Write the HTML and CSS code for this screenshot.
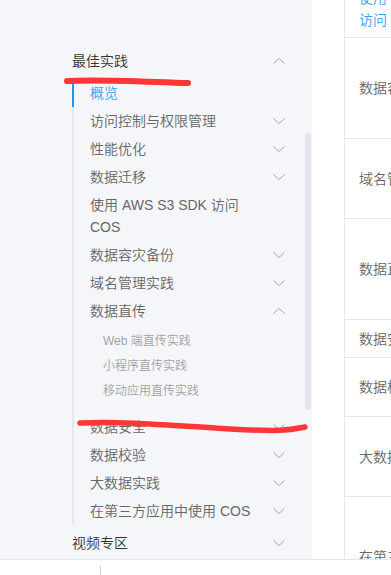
FILE: index.html
```html
<!DOCTYPE html>
<html lang="zh-CN">
<head>
    <meta charset="utf-8" />
    <title>最佳实践</title>
    <link rel="stylesheet" href="styles.css">
</head>
<body>
<div class="page">
    <aside class="sidebar">
        <ul class="menu">
            <li class="menu-item">
                <div class="menu-title">最佳实践<svg class="chev" viewBox="0 0 12 6"><polyline points="0.5,5.5 6,0.5 11.5,5.5"/></svg></div>
                <ul class="sub">
                    <li class="sub-item active"><div class="sub-title">概览</div></li>
                    <li class="sub-item"><div class="sub-title">访问控制与权限管理<svg class="chev" viewBox="0 0 12 6"><polyline points="0.5,0.5 6,5.5 11.5,0.5"/></svg></div></li>
                    <li class="sub-item"><div class="sub-title">性能优化<svg class="chev" viewBox="0 0 12 6"><polyline points="0.5,0.5 6,5.5 11.5,0.5"/></svg></div></li>
                    <li class="sub-item"><div class="sub-title">数据迁移<svg class="chev" viewBox="0 0 12 6"><polyline points="0.5,0.5 6,5.5 11.5,0.5"/></svg></div></li>
                    <li class="sub-item"><div class="sub-title"><span class="wrap">使用 AWS S3 SDK 访问 COS</span></div></li>
                    <li class="sub-item"><div class="sub-title">数据容灾备份<svg class="chev" viewBox="0 0 12 6"><polyline points="0.5,0.5 6,5.5 11.5,0.5"/></svg></div></li>
                    <li class="sub-item"><div class="sub-title">域名管理实践<svg class="chev" viewBox="0 0 12 6"><polyline points="0.5,0.5 6,5.5 11.5,0.5"/></svg></div></li>
                    <li class="sub-item">
                        <div class="sub-title">数据直传<svg class="chev" viewBox="0 0 12 6"><polyline points="0.5,5.5 6,0.5 11.5,5.5"/></svg></div>
                        <ul class="leaf">
                            <li>Web 端直传实践</li>
                            <li>小程序直传实践</li>
                            <li>移动应用直传实践</li>
                        </ul>
                    </li>
                    <li class="sub-item"><div class="sub-title">数据安全<svg class="chev" viewBox="0 0 12 6"><polyline points="0.5,0.5 6,5.5 11.5,0.5"/></svg></div></li>
                    <li class="sub-item"><div class="sub-title">数据校验<svg class="chev" viewBox="0 0 12 6"><polyline points="0.5,0.5 6,5.5 11.5,0.5"/></svg></div></li>
                    <li class="sub-item"><div class="sub-title">大数据实践<svg class="chev" viewBox="0 0 12 6"><polyline points="0.5,0.5 6,5.5 11.5,0.5"/></svg></div></li>
                    <li class="sub-item"><div class="sub-title">在第三方应用中使用 COS<svg class="chev" viewBox="0 0 12 6"><polyline points="0.5,0.5 6,5.5 11.5,0.5"/></svg></div></li>
                </ul>
            </li>
            <li class="menu-item">
                <div class="menu-title">视频专区<svg class="chev" viewBox="0 0 12 6"><polyline points="0.5,0.5 6,5.5 11.5,0.5"/></svg></div>
            </li>
        </ul>
        <div class="scroll-thumb"></div>
    </aside>
    <main class="content">
        <div class="doc-table">
            <div class="row"><a href="#" class="link">使用 AWS S3 SDK<br>访问 COS</a></div>
            <div class="row">数据容灾备份</div>
            <div class="row">域名管理实践</div>
            <div class="row">数据直传</div>
            <div class="row">数据安全</div>
            <div class="row">数据校验</div>
            <div class="row">大数据实践</div>
            <div class="row">在第三方应用中使用 COS</div>
        </div>
    </main>
</div>
<footer class="bottom-bar"><span class="bar-sep"></span></footer>
<svg class="marks" viewBox="0 0 391 575">
    <path d="M67 81 C 100 79, 150 82, 188 83" />
    <path d="M80 423 C 130 421, 175 426, 230 429 S 290 430, 305 427" class="thin" />
</svg>
</body>
</html>
```

FILE: styles.css
```css
* {padding:0; margin:0; box-sizing:border-box}
body {width:391px; height:575px; overflow:hidden; position:relative; background:#fff; font:350 14px/22px "Liberation Sans", "Noto Sans CJK SC", sans-serif; color:#333}
ul {list-style:none}

.page {display:flex; height:559px; overflow:hidden}

/* left nav */
.sidebar {flex:none; width:312px; background:#f5f6fa; padding-top:43px; position:relative; overflow:hidden}
.menu-title {display:flex; justify-content:space-between; align-items:center; padding:7px 27px 7px 72px; color:#333}
.chev {width:12px; height:6px; flex:none; fill:none; stroke:#a3a7ae; stroke-width:1}
.sub {margin-left:72px; border-left:2px solid #e6e8ec}
.sub-title {display:flex; justify-content:space-between; align-items:center; padding:3px 27px 3px 16px; color:#666}
.sub-title .wrap {width:160px}
.sub-item.active .sub-title {color:#2fa2f3; position:relative}
.sub-item.active .sub-title::before {content:""; position:absolute; left:-2px; top:0; bottom:0; width:2px; background:#1a98f0}
.leaf {padding:4px 0 9px 29px; font-size:12px; line-height:25px; color:#a3a3a3}
.scroll-thumb {position:absolute; left:305px; top:133px; width:6px; height:277px; border-radius:3px; background:#e2e5e9}

/* right table */
.content {flex:1; padding-left:32px; overflow:hidden}
.doc-table {margin-top:-20px; border-left:1px solid #e3e6ee}
.row {display:flex; align-items:center; padding-left:14px; border-bottom:1px solid #e3e6ee; white-space:nowrap; color:#666}
.row:nth-child(1) {height:58px}
.row:nth-child(2) {height:101px}
.row:nth-child(3) {height:80px}
.row:nth-child(4) {height:101px}
.row:nth-child(5) {height:38px}
.row:nth-child(6) {height:59px}
.row:nth-child(7) {height:80px}
.row:nth-child(8) {height:120px}
.link {color:#2fa2f3; text-decoration:none}

/* bottom */
.bottom-bar {height:16px; background:#fff; border-top:1px solid #e3e5ea}
.bar-sep {display:block; margin:5px 0 0 100px; width:1px; height:10px; background:#cfd2d8}

/* hand-drawn marks */
.marks {position:absolute; left:0; top:0; width:391px; height:575px; pointer-events:none}
.marks path {fill:none; stroke:#ff3636; stroke-width:6; stroke-linecap:round}
.marks path.thin {stroke-width:5.5}
```
